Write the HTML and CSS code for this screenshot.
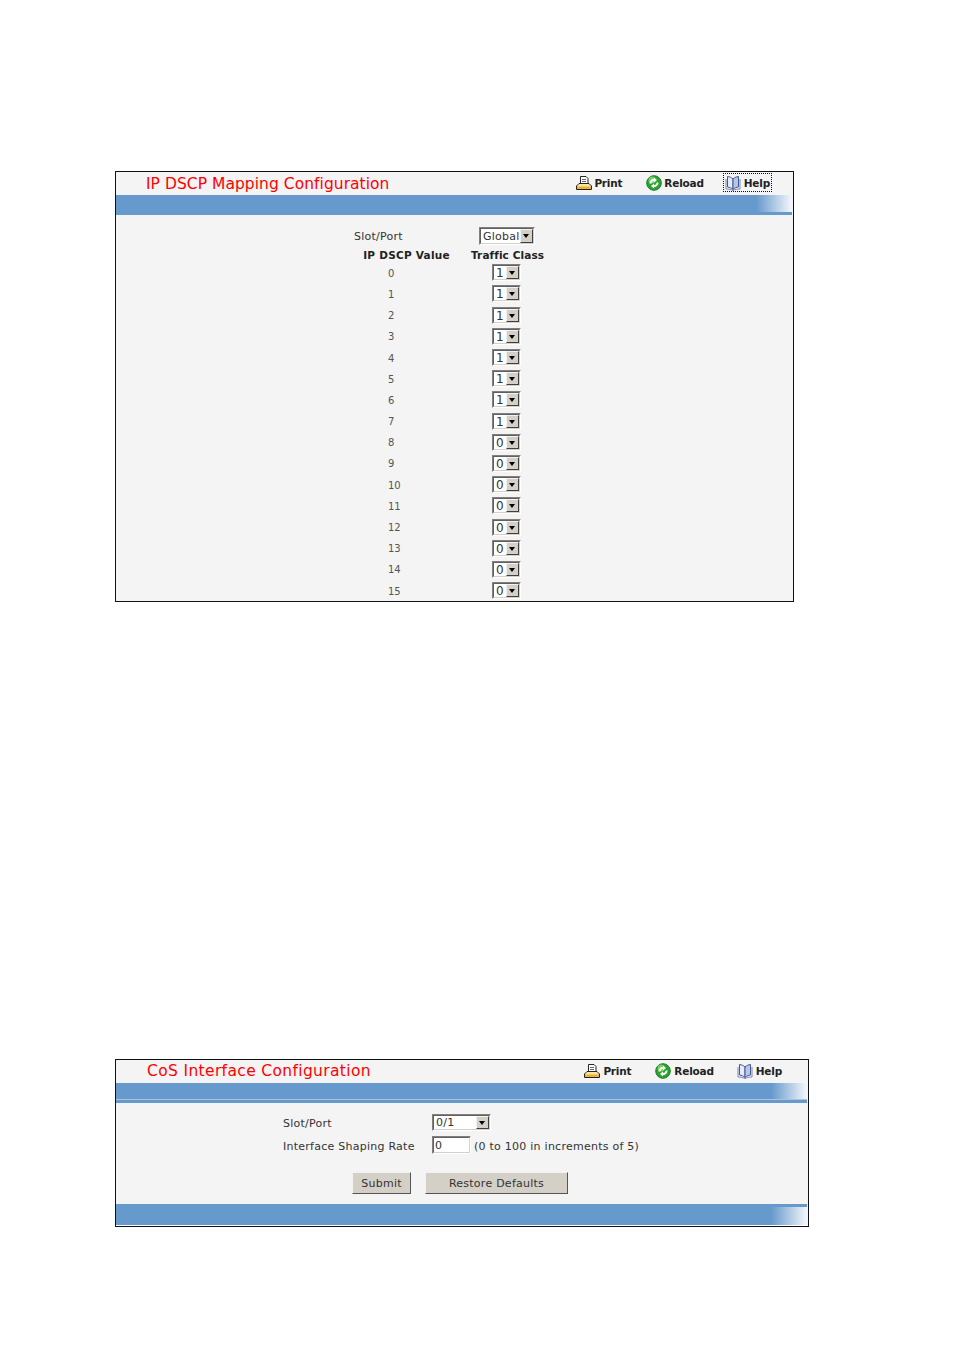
FILE: index.html
```html
<!DOCTYPE html>
<html lang="en">
<head>
<meta charset="utf-8">
<title>IP DSCP Mapping and CoS Interface Configuration</title>
<link rel="stylesheet" href="styles.css">
</head>
<body>
<svg class="defs" width="0" height="0" aria-hidden="true">
  <defs>
    <symbol id="i-print" viewBox="0 0 16 16">
      <path d="M4.500 1.500h5.500l2 2v5h-7.500z" fill="#fff" stroke="#222"/>
      <path d="M6 4.500h4M6 6.500h4" stroke="#667" stroke-width="1"/>
      <path d="M3 8.500h10l2.500 2.500v3.500h-15V11z" fill="#f6e6a8" stroke="#222"/>
      <path d="M1 11.500h14v2.500H1z" fill="#eeb32e"/>
    </symbol>
    <symbol id="i-reload" viewBox="0 0 16 16">
      <circle cx="8" cy="8" r="7.300" fill="#2aa52a" stroke="#157a3a" stroke-width="1"/>
      <circle cx="6" cy="5" r="3.500" fill="#8be06a" opacity=".75"/>
      <path d="M3.500 8.500a4.500 4.500 0 0 1 4.500-4.700V2.500l3 2.500-3 2.500V6a2.700 2.700 0 0 0-2.700 2.500z" fill="#fff"/>
      <path d="M12.500 7.500a4.500 4.500 0 0 1-4.500 4.700v1.300l-3-2.500 3-2.500V10a2.700 2.700 0 0 0 2.700-2.500z" fill="#fff"/>
    </symbol>
    <symbol id="i-help" viewBox="0 0 16 16">
      <path d="M8 4C6.500 2.500 4.500 1.800 2.500 1.500V12c2 .3 4 1 5.500 2.500z" fill="#e6ebf7" stroke="#44598f"/>
      <path d="M8 4c1.500-1.500 3.500-2.200 5.500-2.500V12c-2 .3-4 1-5.500 2.500z" fill="#b7c6e6" stroke="#44598f"/>
      <path d="M1 4v10c2.500 0 5 .5 7 1.500 2-1 4.500-1.500 7-1.500V4" fill="none" stroke="#7287bb"/>
    </symbol>
  </defs>
</svg>

<main class="page">
  <section class="panel panel-dscp">
    <header class="head">
      <h1 class="title">IP DSCP Mapping Configuration</h1>
      <nav class="tools">
        <a class="tool tool-print"><svg class="ico"><use href="#i-print"/></svg>Print</a>
        <a class="tool tool-reload"><svg class="ico"><use href="#i-reload"/></svg>Reload</a>
        <a class="tool tool-help focused"><svg class="ico"><use href="#i-help"/></svg>Help</a>
      </nav>
    </header>
    <div class="band"></div>
    <div class="dscp">
      <div class="dscp-top">
        <span class="lbl">Slot/Port</span>
        <span class="sel sel-global"><select><option>Global</option></select><i class="arrow"></i></span>
      </div>
      <div class="dscp-cols">
        <b class="col-a">IP DSCP Value</b>
        <b class="col-b">Traffic Class</b>
      </div>
      <div class="dscp-rows">
        <div class="row"><span class="num">0</span><span class="sel sel-tc"><select><option>1</option></select><i class="arrow"></i></span></div>
        <div class="row"><span class="num">1</span><span class="sel sel-tc"><select><option>1</option></select><i class="arrow"></i></span></div>
        <div class="row"><span class="num">2</span><span class="sel sel-tc"><select><option>1</option></select><i class="arrow"></i></span></div>
        <div class="row"><span class="num">3</span><span class="sel sel-tc"><select><option>1</option></select><i class="arrow"></i></span></div>
        <div class="row"><span class="num">4</span><span class="sel sel-tc"><select><option>1</option></select><i class="arrow"></i></span></div>
        <div class="row"><span class="num">5</span><span class="sel sel-tc"><select><option>1</option></select><i class="arrow"></i></span></div>
        <div class="row"><span class="num">6</span><span class="sel sel-tc"><select><option>1</option></select><i class="arrow"></i></span></div>
        <div class="row"><span class="num">7</span><span class="sel sel-tc"><select><option>1</option></select><i class="arrow"></i></span></div>
        <div class="row"><span class="num">8</span><span class="sel sel-tc"><select><option>0</option></select><i class="arrow"></i></span></div>
        <div class="row"><span class="num">9</span><span class="sel sel-tc"><select><option>0</option></select><i class="arrow"></i></span></div>
        <div class="row"><span class="num">10</span><span class="sel sel-tc"><select><option>0</option></select><i class="arrow"></i></span></div>
        <div class="row"><span class="num">11</span><span class="sel sel-tc"><select><option>0</option></select><i class="arrow"></i></span></div>
        <div class="row"><span class="num">12</span><span class="sel sel-tc"><select><option>0</option></select><i class="arrow"></i></span></div>
        <div class="row"><span class="num">13</span><span class="sel sel-tc"><select><option>0</option></select><i class="arrow"></i></span></div>
        <div class="row"><span class="num">14</span><span class="sel sel-tc"><select><option>0</option></select><i class="arrow"></i></span></div>
        <div class="row"><span class="num">15</span><span class="sel sel-tc"><select><option>0</option></select><i class="arrow"></i></span></div>
      </div>
    </div>
  </section>

  <section class="panel panel-cos">
    <header class="head">
      <h1 class="title">CoS Interface Configuration</h1>
      <nav class="tools">
        <a class="tool tool-print"><svg class="ico"><use href="#i-print"/></svg>Print</a>
        <a class="tool tool-reload"><svg class="ico"><use href="#i-reload"/></svg>Reload</a>
        <a class="tool tool-help"><svg class="ico"><use href="#i-help"/></svg>Help</a>
      </nav>
    </header>
    <div class="band"></div>
    <div class="cos">
      <div class="cos-row cos-row-port">
        <span class="cos-lbl">Slot/Port</span>
        <span class="sel sel-port"><select><option>0/1</option></select><i class="arrow"></i></span>
      </div>
      <div class="cos-row">
        <span class="cos-lbl">Interface Shaping Rate</span>
        <span class="rate-wrap"><input class="rate" type="text" value="0"></span>
        <span class="hint">(0 to 100 in increments of 5)</span>
      </div>
      <div class="actions">
        <button class="btn btn-submit" type="button">Submit</button>
        <button class="btn btn-restore" type="button">Restore Defaults</button>
      </div>
    </div>
    <div class="band band-end"></div>
  </section>
</main>
</body>
</html>
```
FILE: styles.css
```css
* { box-sizing: border-box; }
html, body { margin: 0; padding: 0; background: #fff; }
body { font-family: "DejaVu Sans", Verdana, sans-serif; font-size: 11px; letter-spacing: .25px; color: #333; }
.defs { display: block; height: 0; }
.page { padding: 171px 0 0 115px; }

.panel { border: 1px solid #111; background: #f4f4f4; }
.panel-dscp { width: 679px; height: 431px; }
.panel-cos { width: 694px; height: 168px; margin-top: 457px; }

.head { display: flex; align-items: center; height: 23px; }
.title { margin: 0 0 0 30px; padding-top: 2px; font-size: 15.500px; letter-spacing: .04px; font-weight: 400; color: #f00; white-space: nowrap; line-height: 21px; }
.panel-cos .title { margin-left: 31px; padding-top: 0; letter-spacing: .35px; }

.tools { display: flex; align-items: center; margin: 0 0 2px auto; font-weight: 700; font-size: 10.500px; letter-spacing: -.2px; color: #222; }
.tool { display: flex; align-items: center; height: 19px; gap: 3px; }
.ico { width: 16px; height: 16px; flex: none; }
.panel-dscp .tools { margin-right: 21px; gap: 19px; }
.panel-dscp .tool-print { gap: 2px; margin-right: 5px; }
.panel-dscp .tool-reload { gap: 2px; }
.panel-cos .tools { margin-right: 26px; gap: 23px; }
.panel-cos .tool-print { margin-right: 1px; }
.focused { outline: 1px dotted #111; outline-offset: -1px; padding: 0 2px; }

.band { height: 20px; margin-right: 1px; background: linear-gradient(to right, #6699cc 0, #6699cc calc(100% - 36px), #f4f7fb 100%); border-bottom: 3px solid #6699cc; }
.panel-cos .band { box-shadow: inset 0 -1px 0 #a8c4e0; }
.panel-cos .band-end { height: 21px; margin-top: 10px; border-top: 3px solid #6699cc; border-bottom: 0; box-shadow: 0 1px 0 #fff; }

.dscp { padding: 12px 0 0 238px; }
.dscp-top { display: flex; align-items: center; height: 18px; }
.lbl { width: 125px; }
.dscp-cols { display: flex; align-items: center; height: 19px; font-size: 10.500px; }
.col-a { width: 117px; padding-right: 12px; text-align: center; color: #222; white-space: nowrap; }
.col-b { width: 72px; text-align: center; color: #222; letter-spacing: .1px; white-space: nowrap; }
.dscp-rows { display: grid; grid-auto-rows: 21.200px; margin-top: -1.800px; }
.row { display: flex; align-items: center; }
.num { width: 138px; padding: 1px 0 0 34px; font-size: 10px; letter-spacing: 0; color: #555; }

.sel { position: relative; display: inline-block; height: 18px; border: 1px solid; border-color: #808080 #fff #fff #808080; background: #fff; }
.sel select { appearance: none; display: block; width: 100%; height: 100%; margin: 0; padding: 0 0 0 2px; border: 1px solid; border-color: #606060 #d4d0c8 #d4d0c8 #606060; border-radius: 0; background: #fff; font: inherit; letter-spacing: inherit; color: #333; }
.arrow { position: absolute; top: 1px; right: 1px; bottom: 1px; width: 13px; background: #d4d0c8; border: 1px solid; border-color: #f4f2ee #404040 #404040 #f4f2ee; }
.arrow::after { content: ""; position: absolute; left: 2px; top: 4px; border: 3.500px solid transparent; border-top: 4px solid #000; border-bottom: 0; }
.sel-global { width: 56px; }
.sel-tc { width: 29px; height: 17px; font-size: 12px; }
.sel-port { width: 59px; height: 17px; }

.cos { padding: 11px 0 0 167px; }
.cos-row { display: flex; align-items: center; height: 18px; margin-bottom: 5px; }
.cos-row-port { height: 17px; }
.cos-lbl { width: 149px; padding-top: 2px; white-space: nowrap; }
.rate-wrap { display: block; width: 39px; height: 18px; border: 1px solid; border-color: #808080 #fff #fff #808080; }
.rate { display: block; width: 100%; height: 100%; margin: 0; padding: 0 0 0 1px; border: 1px solid; border-color: #606060 #d4d0c8 #d4d0c8 #606060; background: #fff; font: inherit; letter-spacing: inherit; color: #333; border-radius: 0; }
.hint { margin-left: 3px; padding-top: 2px; white-space: nowrap; }

.actions { display: flex; gap: 14px; padding: 13px 0 0 69px; }
.btn { height: 22px; margin: 0; padding: 0; background: #d4d0c8; border: 1px solid; border-color: #f4f2ee #555 #555 #f4f2ee; font: inherit; letter-spacing: inherit; color: #333; }
.btn-submit { width: 59px; }
.btn-restore { width: 143px; }
```
